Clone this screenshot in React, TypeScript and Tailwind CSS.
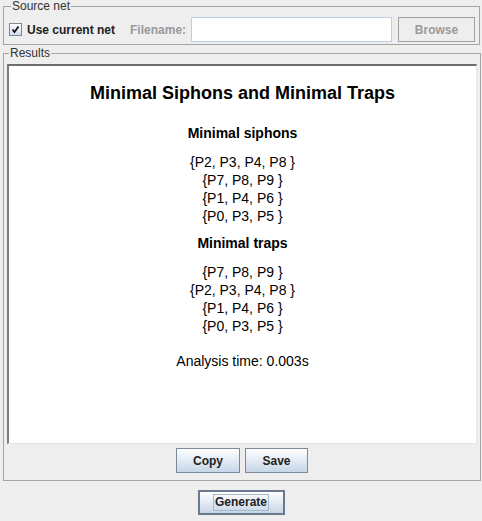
import React from 'react';

const siphons = ['{P2, P3, P4, P8 }', '{P7, P8, P9 }', '{P1, P4, P6 }', '{P0, P3, P5 }'];
const traps = ['{P7, P8, P9 }', '{P2, P3, P4, P8 }', '{P1, P4, P6 }', '{P0, P3, P5 }'];

const MetalButton: React.FC<{ label: string; width: string; focused?: boolean }> = ({ label, width, focused }) => (
  <button
    className={
      'h-[25px] flex items-center justify-center text-[12px] font-bold text-[#222] bg-gradient-to-b from-[#ffffff] to-[#c6d6e6] ' +
      width +
      (focused ? ' border-2 border-[#6a7a8c]' : ' border border-[#7a8a99]')
    }
  >
    {focused ? (
      <span className="border border-[#a3b8cc] px-[1px] leading-[15px]">{label}</span>
    ) : (
      <span>{label}</span>
    )}
  </button>
);

const App: React.FC = () => {
  return (
    <div className="w-[482px] h-[521px] bg-[#eeeeee] font-['Liberation_Sans',Arial,sans-serif] text-[#222] overflow-hidden">
      {/* Source net */}
      <fieldset className="ml-[3px] w-[477px] border border-[#a5a5a5] pl-[5px] pr-[3px] pt-[4px] pb-[2px]">
        <legend className="ml-[2px] px-[1px] text-[12px] leading-[13px] text-[#333]">Source net</legend>
        <div className="flex items-center h-[25px] whitespace-nowrap">
          <div className="shrink-0 w-[13px] h-[13px] border border-[#7a8a99] bg-gradient-to-b from-[#ffffff] to-[#cfdceb] flex items-center justify-center">
            <svg width="9" height="9" viewBox="0 0 9 9">
              <path d="M1.5 4.5 L3.5 7 L7.5 1.5" stroke="#111" strokeWidth="1.8" fill="none" />
            </svg>
          </div>
          <span className="shrink-0 ml-[5px] text-[12px] font-bold text-[#222]">Use current net</span>
          <span className="shrink-0 ml-[15px] text-[12px] font-bold text-[#999]">Filename:</span>
          <div className="shrink-0 ml-[5px] w-[201px] h-[25px] bg-white border border-[#b8cfe5]"></div>
          <div className="shrink-0 ml-[6px] w-[77px] h-[25px] border border-[#a0a0a0] flex items-center justify-center text-[12px] font-bold text-[#999]">
            Browse
          </div>
        </div>
      </fieldset>

      {/* Results */}
      <fieldset className="ml-[3px] mt-[2px] w-[477px] border border-[#a5a5a5] px-[3px] pt-[4px] pb-[7px]">
        <legend className="ml-[2px] px-[1px] text-[12px] leading-[13px] text-[#333]">Results</legend>
        <div className="w-[470px] h-[380px] bg-white border-t-2 border-l-2 border-t-[#6e6e6e] border-l-[#7c7c7c] border-r border-b border-r-[#e4e4e4] border-b-[#e4e4e4] flex flex-col items-center text-black">
          <div className="mt-[16px] text-[18px] font-bold leading-[22px]">Minimal Siphons and Minimal Traps</div>
          <div className="mt-[21px] text-[14px] font-bold leading-[16px]">Minimal siphons</div>
          <div className="mt-[12px] flex flex-col items-center text-[14px] leading-[18px]">
            {siphons.map((s, i) => (
              <div key={i}>{s}</div>
            ))}
          </div>
          <div className="mt-[10px] text-[14px] font-bold leading-[16px]">Minimal traps</div>
          <div className="mt-[12px] flex flex-col items-center text-[14px] leading-[18px]">
            {traps.map((s, i) => (
              <div key={i}>{s}</div>
            ))}
          </div>
          <div className="mt-[17px] text-[14px] leading-[18px]">Analysis time: 0.003s</div>
        </div>
        <div className="mt-[4px] flex justify-center gap-[5px]">
          <MetalButton label="Copy" width="w-[64px]" />
          <MetalButton label="Save" width="w-[63px]" />
        </div>
      </fieldset>

      <div className="mt-[9px] flex justify-center">
        <MetalButton label="Generate" width="w-[87px]" focused />
      </div>
    </div>
  );
};

export default App;
